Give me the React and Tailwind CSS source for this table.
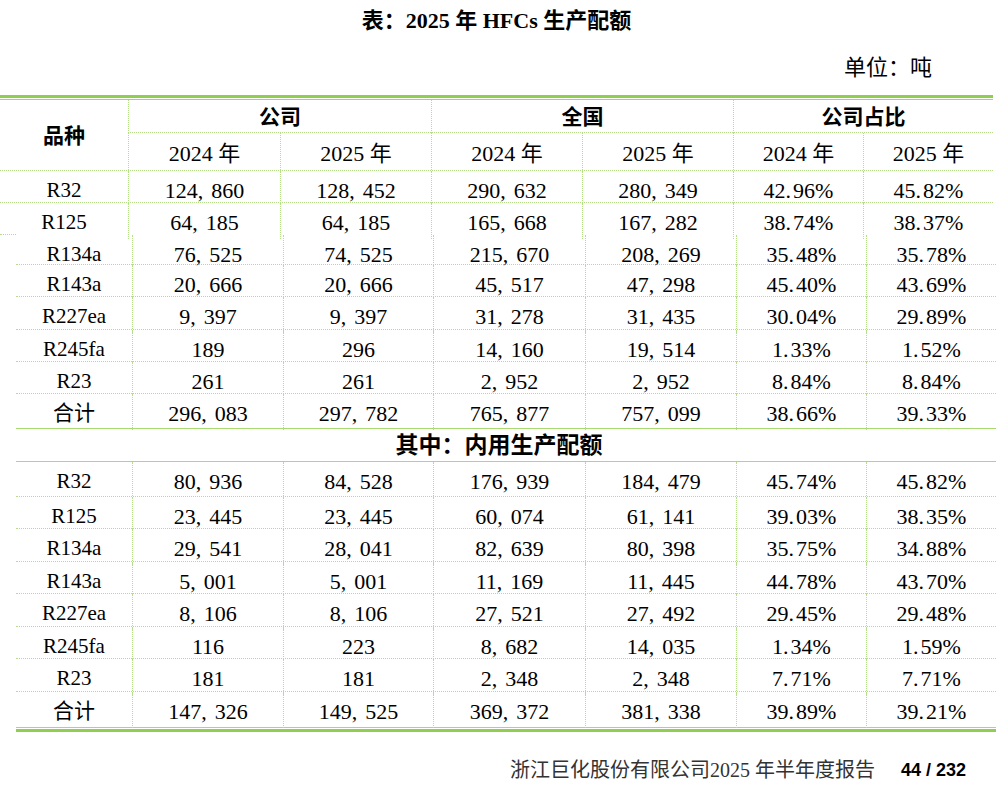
const FONT = { fontFamily: "'Liberation Serif', 'Noto Sans CJK SC', serif" };

const TOP_COLS = 'grid grid-cols-[128px_152px_151px_151px_151px_130px_130px]';
const BODY_COLS = 'grid grid-cols-[116px_151px_150px_152px_151px_130px_130px]';

const topRows = [
  ['R32', '124,860', '128,452', '290,632', '280,349', '42.96%', '45.82%'],
  ['R125', '64,185', '64,185', '165,668', '167,282', '38.74%', '38.37%'],
];

const totalRows = [
  ['R134a', '76,525', '74,525', '215,670', '208,269', '35.48%', '35.78%', 30],
  ['R143a', '20,666', '20,666', '45,517', '47,298', '45.40%', '43.69%', 32],
  ['R227ea', '9,397', '9,397', '31,278', '31,435', '30.04%', '29.89%', 33],
  ['R245fa', '189', '296', '14,160', '19,514', '1.33%', '1.52%', 32],
  ['R23', '261', '261', '2,952', '2,952', '8.84%', '8.84%', 32],
  ['合计', '296,083', '297,782', '765,877', '757,099', '38.66%', '39.33%', 34],
];

const internalRows = [
  ['R32', '80,936', '84,528', '176,939', '184,479', '45.74%', '45.82%', 35],
  ['R125', '23,445', '23,445', '60,074', '61,141', '39.03%', '38.35%', 32],
  ['R134a', '29,541', '28,041', '82,639', '80,398', '35.75%', '34.88%', 33],
  ['R143a', '5,001', '5,001', '11,169', '11,445', '44.78%', '43.70%', 32],
  ['R227ea', '8,106', '8,106', '27,521', '27,492', '29.45%', '29.48%', 33],
  ['R245fa', '116', '223', '8,682', '14,035', '1.34%', '1.59%', 32],
  ['R23', '181', '181', '2,348', '2,348', '7.71%', '7.71%', 33],
  ['合计', '147,326', '149,525', '369,372', '381,338', '39.89%', '39.21%', 35],
];

// widen comma / period like the full-width punctuation of the source font
function Num({ v }) {
  const parts = v.split(/([,.])/);
  return parts.map((p, i) =>
    p === ',' ? (
      <span key={i} className="mr-[8px]">,</span>
    ) : p === '.' ? (
      <span key={i} className="mr-[2px]">.</span>
    ) : (
      <span key={i}>{p}</span>
    )
  );
}

function Cells({ row }) {
  return row.slice(0, 7).map((c, i) => (
    <div
      key={i}
      className={
        'flex items-center justify-center pt-[3px] ' +
        (i > 0 ? 'text-[22px] border-l border-dotted border-[#b3df88]' : '')
      }
    >
      <Num v={c} />
    </div>
  ));
}

function BodyRow({ row, last }) {
  return (
    <div
      className={
        BODY_COLS +
        (last ? '' : ' border-b border-dotted border-[#b3df88]')
      }
      style={{ height: row[7] }}
    >
      <Cells row={row} />
    </div>
  );
}

export default function App() {
  return (
    <div className="w-[1003px] h-[801px] bg-white text-[21px] text-black" style={FONT}>
      <div className="w-[993px] h-[40px] flex items-center justify-center text-[22px] font-bold">
        表：2025 年 HFCs 生产配额
      </div>
      <div className="mt-[8px] h-[36px] flex items-center justify-end pr-[71px] text-[22px] pt-[2px]">
        单位：吨
      </div>

      {/* top double rule */}
      <div className="mt-[11px] w-[993px]">
        <div className="h-[3px] bg-[#8fce4e]" />
        <div className="h-[1px]" />
        <div className="h-[1px] bg-[#9fd866]" />
      </div>

      {/* header + first rows */}
      <div className="w-[993px]">
        <div className={TOP_COLS + ' grid-rows-[33px_37px] border-b border-dotted border-[#b3df88]'}>
          <div className="row-span-2 flex items-center justify-center font-bold pt-[3px]">品种</div>
          <div className="col-span-2 flex items-center justify-center pt-[3px] font-bold border-l border-b border-dotted border-[#b3df88]">公司</div>
          <div className="col-span-2 flex items-center justify-center pt-[3px] font-bold border-l border-b border-dotted border-[#b3df88]">全国</div>
          <div className="col-span-2 flex items-center justify-center pt-[3px] font-bold border-l border-b border-dotted border-[#b3df88]">公司占比</div>
          {['2024 年', '2025 年', '2024 年', '2025 年', '2024 年', '2025 年'].map((t, i) => (
            <div key={i} className="flex items-center justify-center pt-[4px] text-[22px] border-l border-dotted border-[#b3df88]">
              {t}
            </div>
          ))}
        </div>
        <div className={TOP_COLS + ' h-[32px] border-b border-dotted border-[#b3df88]'}>
          <Cells row={topRows[0]} />
        </div>
        <div className={TOP_COLS + ' h-[31px]'}>
          <Cells row={topRows[1]} />
        </div>
        <div className="w-[16px] h-[1px] border-b border-dotted border-[#b3df88]" />
      </div>

      {/* continued table */}
      <div className="ml-[16px] w-[980px]">
        {totalRows.map((r, i) => (
          <BodyRow key={i} row={r} last={i === totalRows.length - 1} />
        ))}
        <div className="h-[34px] flex items-center justify-center pr-[14px] pt-[2px] border-y border-[#a7db72] font-bold text-[23px]">
          其中：内用生产配额
        </div>
        {internalRows.map((r, i) => (
          <BodyRow key={i} row={r} last={i === internalRows.length - 1} />
        ))}
        <div className="h-[1px] bg-[#a7db72]" />
        <div className="h-[1px]" />
        <div className="h-[3px] bg-[#8fce4e]" />
      </div>

      {/* footer */}
      <div className="mt-[24px] h-[28px] flex items-center justify-end pr-[37px]">
        <span className="text-[20px] text-[#333]">浙江巨化股份有限公司2025 年半年度报告</span>
        <span
          className="ml-[26px] text-[18px] font-bold text-black"
          style={{ fontFamily: "'Liberation Sans', Arial, sans-serif" }}
        >
          44 / 232
        </span>
      </div>
    </div>
  );
}
